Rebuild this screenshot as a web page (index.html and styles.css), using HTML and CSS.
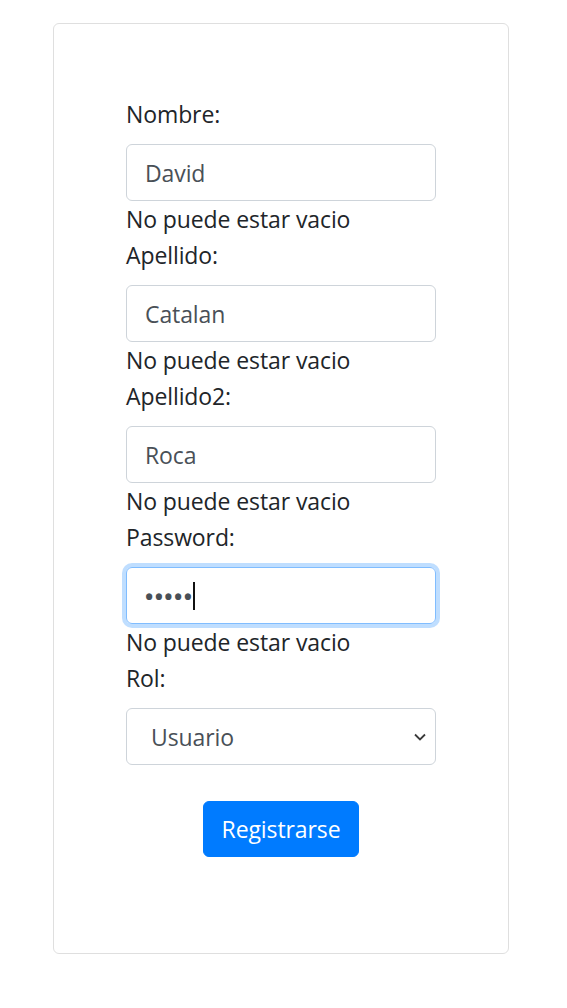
FILE: index.html
```html
<!DOCTYPE html>
<html lang="es">
<head>
<meta charset="utf-8">
<title>Registro</title>
<link rel="stylesheet" href="styles.css">
</head>
<body>
<div class="card">
  <form class="form">
    <label class="label">Nombre:</label>
    <div class="control">David</div>
    <div class="error">No puede estar vacio</div>
    <label class="label">Apellido:</label>
    <div class="control">Catalan</div>
    <div class="error">No puede estar vacio</div>
    <label class="label">Apellido2:</label>
    <div class="control">Roca</div>
    <div class="error">No puede estar vacio</div>
    <label class="label">Password:</label>
    <div class="control focus"><span class="dots">•••••</span><span class="caret"></span></div>
    <div class="error">No puede estar vacio</div>
    <label class="label">Rol:</label>
    <div class="control select"><span class="opt">Usuario</span>
      <svg class="chev" width="14" height="10" viewBox="0 0 14 10"><path d="M2 2.5 L7 7.5 L12 2.5" fill="none" stroke="#3a3a3a" stroke-width="1.8"/></svg>
    </div>
    <div class="actions"><button type="button" class="btn">Registrarse</button></div>
  </form>
</div>
</body>
</html>
```
FILE: styles.css
```css
html, body { margin: 0; padding: 0; background: #fff; }
body {
  font-family: "Open Sans", "Noto Sans", sans-serif;
  font-size: 23px;
  letter-spacing: -0.1px;
  line-height: 36px;
  color: #212529;
  padding-top: 23px;
}
.card {
  margin-left: 53px;
  width: 456px;
  box-sizing: border-box;
  border: 1px solid #dfdfdf;
  border-radius: 6px;
  padding: 72px 72px 96px;
}
.form { display: flex; flex-direction: column; }
.label { display: block; margin-bottom: 12px; }
.control {
  box-sizing: border-box;
  height: 57px;
  border: 1.5px solid #ced4da;
  border-radius: 6px;
  padding: 0 18px;
  display: flex;
  align-items: center;
  color: #495057;
}
.focus {
  border-color: #80bdff;
  box-shadow: 0 0 0 4px rgba(0, 123, 255, 0.25);
}
.dots { font-size: 22px; font-weight: 700; letter-spacing: 1.4px; color: #495057; }
.caret { display: inline-block; width: 2px; height: 28px; background: #111; margin-left: 0; }
.select { justify-content: space-between; padding: 0 8px 0 24px; }
.chev { margin-right: 0; }
.actions { display: flex; justify-content: center; margin-top: 36px; }
.btn {
  font-family: inherit;
  font-size: 23px;
  letter-spacing: -0.1px;
  line-height: 36px;
  color: #fff;
  background: #007bff;
  border: 1.5px solid #007bff;
  border-radius: 6px;
  padding: 9px 18px;
  height: 56px;
}
```
